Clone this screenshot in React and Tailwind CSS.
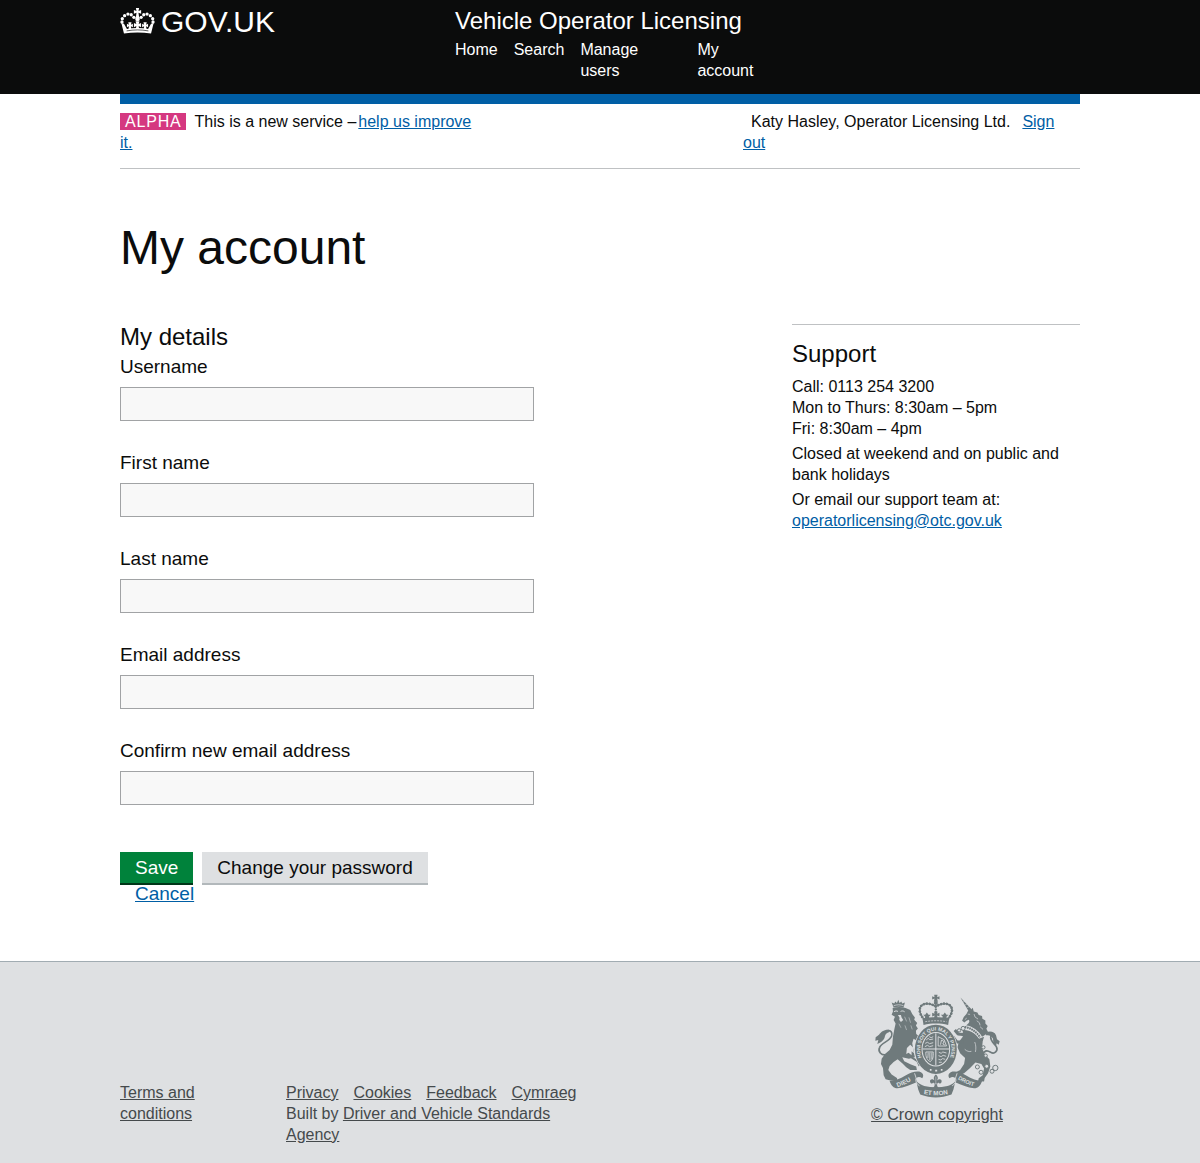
const CREST = '#6f7a7c';
const PAPER = '#dee0e2';

function GovCrown() {
  const balls = [[36, 66], [37, 56], [44, 47], [54, 42], [64, 44], [72, 52]];
  const arch = balls.map(([x, y]) => <circle key={x + '-' + y} cx={x} cy={y} r="5" />);
  const cross = 'M-5-10h10l-2 7 6-3v11l-6-3 2 14h-10l2-14-6 3V-6l6 3z';
  return (
    <svg viewBox="30 24 106 78" className="w-[35px] h-[26px] shrink-0" fill="currentColor" aria-hidden="true">
      <path d="M78 24h10l-2 9 8-3v11l-8-3 2 15h-10l2-15-8 3V30l8 3z" />
      <circle cx="83" cy="57" r="7" />
      <g>{arch}</g>
      <g transform="translate(166 0) scale(-1 1)">{arch}</g>
      <path d={cross} transform="translate(60 77)" />
      <path d={cross} transform="translate(106 77)" />
      <path d={cross} transform="translate(83 76) scale(1.2)" />
      <path d="M42 101L34 69L42 71L51 87C72 83 94 83 115 87L124 71L132 69L124 101C98 97 68 97 42 101Z" />
      <path d="M50 93C72 89 94 89 116 93" fill="none" stroke="#0b0c0c" strokeWidth="2" />
    </svg>
  );
}

function CoatOfArms() {
  return (
    <svg viewBox="30 24 376 312" className="w-[125px] h-[104px]" fill={CREST} role="img" aria-label="Royal coat of arms">
      {/* central crown */}
      <path d="M208 26h10l-1 7 7-3v10l-7-3 2 10h-12l2-10-7 3V30l7 3z" />
      <circle cx="213" cy="51" r="6" />
      <g fill="none" stroke={CREST} strokeLinecap="round">
        <path d="M178 100c-16-17-18-36-5-44 13-7 28-2 40 5 12-7 27-12 40-5 13 8 11 27-5 44" strokeWidth="4" />
        <path d="M178 100c-16-17-18-36-5-44 13-7 28-2 40 5 12-7 27-12 40-5 13 8 11 27-5 44" strokeWidth="8" strokeDasharray="0.1 9" />
        <path d="M213 62v20" strokeWidth="7" strokeDasharray="0.1 8" />
      </g>
      <path d="M208 76h10l-1 7 7-3v11l-7-3 2 12h-12l2-12-7 3V80l7 3zM186 79l5 7h7l-6 6 3 9h-16l2-9-6-6h6zM240 79l-5 7h-7l6 6-3 9h16l-2-9 6-6h-6z" />
      <path d="M173 98c26-6 54-6 80 0l-3 19c-24-6-50-6-74 0z" />
      <path d="M181 107c21-4 43-4 64 0" fill="none" stroke={PAPER} strokeWidth="2" strokeDasharray="6 3" />

      {/* lion */}
      <path d="M86 64L80 49L88 52L91 46L96 51L100 41L104 51L109 46L112 52L120 49L116 64C106 61 96 61 86 64Z" />
      <path d="M86 59C96 55 106 55 116 59" fill="none" stroke={PAPER} strokeWidth="2" />
      <path d="M83 66C95 62 110 62 122 66L136 72L142 84L150 94L148 101L157 111L153 118L159 127L153 134L154 144L164 152L168 162L156 164L146 158L142 172L146 196L150 214L132 218L112 214L118 226L138 236L154 242L156 252L136 252L124 244L112 232L98 220L86 228L74 240L70 252L80 266L96 276L98 286L76 284L62 280L56 268L54 246L48 234L50 218L60 204L74 192L82 176L84 152L88 130L92 112L86 102L90 92L80 86L84 76Z" />
      <path d="M87 77c4-3 8-3 12-1M107 76c4-2 8-2 12 1" fill="none" stroke={PAPER} strokeWidth="3" />
      <path d="M99 87h9l2 7 5 8-7 6-5-6 1-7z" fill={PAPER} />
      <path d="M119 92l6 14M102 113l6 12M132 94l5 16M120 118l5 14M138 118l4 12" fill="none" stroke={PAPER} strokeWidth="1.5" />
      <path d="M126 186L136 176L144 184L147 202L140 196L140 208L131 200L124 204Z" fill={PAPER} />
      <path d="M140 214L158 226L164 240" fill="none" stroke={CREST} strokeWidth="6" />
      <path d="M66 206C48 210 38 196 44 184C50 170 74 166 80 150C84 138 76 132 66 134" fill="none" stroke={CREST} strokeWidth="5" />
      <path d="M72 131C56 130 48 138 42 146L32 154L31 164L40 162L37 174C50 168 58 162 60 150C62 144 66 140 72 139Z" />

      {/* unicorn */}
      <path d="M287 34L321 70L312 76Z" />
      <path d="M294 48l9-3M300 57l9-4M306 65l9-4" stroke={PAPER} strokeWidth="1.5" />
      <path d="M310 74L318 72L324 65L327 76L338 79L342 87L352 90L353 98L362 103L362 112L369 120L365 128L370 138L362 146L352 152C342 134 322 119 304 118C313 112 316 106 312 101L305 104L299 109L292 104L297 93L305 84Z" />
      <path d="M309 84l7 1M300 101l6-5M328 84l3 9 9 6M336 104l8 6 2 8M346 122l9 8" fill="none" stroke={PAPER} strokeWidth="2" />
      <path d="M300 123C318 125 336 138 346 154" fill="none" stroke={CREST} strokeWidth="6" strokeDasharray="5 2" />
      <path d="M294 132C314 130 332 142 343 158L358 152L354 166L352 186L360 204L374 220L377 242L370 262L360 276L358 287L340 286L342 277L354 268L358 248L350 234L332 230L316 246L298 262L278 272L268 268L272 260L286 252L298 234L301 216L286 202L278 184L282 168L294 152Z" />
      <path d="M300 146L280 144L270 132M296 168L276 168L264 152" fill="none" stroke={CREST} strokeWidth="9" strokeLinejoin="round" />
      <path d="M300 190c6 6 14 8 20 6M330 168c4 10 4 20 2 30" fill="none" stroke={PAPER} strokeWidth="2" />
      <path d="M352 206C362 190 370 194 378 199C390 206 400 194 396 184C392 174 378 168 378 154C378 146 384 140 390 146" fill="none" stroke={CREST} strokeWidth="5" />
      <path d="M364 140C376 132 390 138 394 148L397 160L405 166L402 176L396 172L394 180C388 176 385 168 385 158C380 150 374 146 364 148Z" />
      <g fill="none" stroke={CREST} strokeWidth="3">
        <circle cx="295" cy="127" r="6" />
        <circle cx="283" cy="133" r="5" />
        <circle cx="338" cy="243" r="6" />
        <circle cx="349" cy="259" r="6" />
        <circle cx="382" cy="256" r="6" />
        <circle cx="392" cy="246" r="8" />
      </g>
      <g fill={PAPER} stroke={CREST} strokeWidth="3">
        <circle cx="356" cy="184" r="5" />
        <circle cx="363" cy="209" r="5" />
        <circle cx="366" cy="241" r="6" />
      </g>

      {/* garter and shield */}
      <ellipse cx="213" cy="190" rx="65" ry="76" fill={PAPER} />
      <ellipse cx="213" cy="190" rx="63" ry="74" />
      <path id="garter" d="M177 227A47 57 0 1 1 249 227" fill="none" />
      <text fontFamily="Liberation Sans, sans-serif" fontWeight="bold" fontSize="15" fill={PAPER}>
        <textPath href="#garter" startOffset="50%" textAnchor="middle">HONI SOIT QUI MAL Y PENSE</textPath>
      </text>
      <ellipse cx="213" cy="190" rx="43" ry="52" fill={PAPER} />
      <ellipse cx="213" cy="190" rx="40" ry="49" />
      <path d="M213 142v96M173 189h80" stroke={PAPER} strokeWidth="3" />
      <g fill="none" stroke={PAPER} strokeWidth="2.5">
        <path d="M184 162l6-5 5 4 10-2M181 172l7-3 6 4 11-3M180 182l8-4 6 4 11-3M193 152l6 3 6-3" />
        <path d="M220 180v-28l18 9 7 19zM227 176l3-14 8 5-4 7 6 3" />
        <path d="M183 198c-1 17 5 25 13 29 8-6 10-13 9-29zM190 200l-1 16M195 200v22M201 200v20" />
        <path d="M222 199l7 3 5-4 11 3M221 209l8 3 6-4 9 3M221 220l7 2 5-4 8 2M222 229l9 0" />
      </g>
      <path d="M195 252h5M211 254h6M228 252h5" stroke={PAPER} strokeWidth="5" />

      {/* motto scroll */}
      <ellipse cx="213" cy="290" rx="42" ry="24" fill={PAPER} />
      <path d="M213 266c8 7 7 13 3 19 7-9 17-4 14 4-2 5-8 5-9 1l-4 4v6l5 7h-18l5-7v-6l-4-4c-1 4-7 4-9-1-3-8 7-13 14-4-4-6-5-12 3-19z" />
      <path d="M213 272v22M203 294h20" stroke={PAPER} strokeWidth="1.5" />
      <path d="M74 285c14 0 31-6 49-17 13-8 28-13 40-11 12 3 15 13 9 20-8-6-17-5-18 3 0 9 10 15 24 20 24 5 47 5 70 0 15-5 25-11 24-20-1-8-10-9-18-3-6-7-3-17 9-20 12-2 27 3 40 11 18 11 35 17 49 17-4 13-12 22-24 22-20-1-37-10-57-18l-5 22-6 15c-34 12-60 12-94 0l-6-15-5-22c-20 8-37 17-57 18-12 0-20-9-24-22z" />
      <path d="M153 278c-2 9 3 17 11 22M273 278c2 9-3 17-11 22M149 262l6 18M277 262l-6 18" fill="none" stroke={PAPER} strokeWidth="2.5" />
      <path id="dieu" d="M98 304Q124 295 150 278" fill="none" />
      <path id="etmon" d="M164 322Q213 334 262 322" fill="none" />
      <path id="droit" d="M279 279Q302 295 336 304" fill="none" />
      <g fontFamily="Liberation Sans, sans-serif" fontWeight="bold" fontSize="19" fill={PAPER}>
        <text><textPath href="#dieu">DIEU</textPath></text>
        <text><textPath href="#etmon" startOffset="50%" textAnchor="middle">ET MON</textPath></text>
        <text fontSize="17"><textPath href="#droit">DROIT</textPath></text>
      </g>
    </svg>
  );
}

function Field({ id, label, type = 'text' }) {
  return (
    <div className="mb-[29px]">
      <label htmlFor={id} className="block text-[19px] leading-[25px] mb-2">{label}</label>
      <input id={id} name={id} type={type} className="block w-[414px] max-w-full h-[34px] px-1 text-[19px] bg-[#f8f8f8] border border-[#a1a3a5] rounded-none" />
    </div>
  );
}

export default function App() {
  return (
    <div className="min-h-screen flex flex-col bg-white text-[#0b0c0c] text-[16px] leading-[21px] font-['Helvetica','Liberation_Sans',Arial,sans-serif]">
      <header className="bg-[#0b0c0c] text-white">
        <div className="max-w-[960px] w-full mx-auto flex pt-2 pb-[13px]">
          <div className="w-[335px]">
            <a href="#" className="inline-flex gap-[6px] text-[30px] leading-[28px]">
              <GovCrown />
              <span>GOV.UK</span>
            </a>
          </div>
          <div>
            <a href="#" className="block text-[24px] leading-[26px] mb-[5px]">Vehicle Operator Licensing</a>
            <nav>
              <ul className="flex gap-4">
                <li><a href="#">Home</a></li>
                <li><a href="#">Search</a></li>
                <li className="w-[101px]"><a href="#">Manage<br />users</a></li>
                <li><a href="#">My<br />account</a></li>
              </ul>
            </nav>
          </div>
        </div>
      </header>

      <div className="w-full max-w-[960px] mx-auto grow">
        <div className="h-[10px] bg-[#005ea5]" />
        <div className="flex justify-between border-b border-[#bfc1c3] pt-[7px] pb-[15px]">
          <p className="w-[360px]">
            <strong className="inline-block mr-2 px-[5px] leading-[17px] bg-[#d53880] text-white font-normal tracking-wider">ALPHA</strong>
            <span className="mr-[2px]">This is a new service –</span>
            <a href="#" className="text-[#005ea5] underline">help us improve it.</a>
          </p>
          <p className="w-[337px]">
            <span className="ml-2 mr-3">Katy Hasley, Operator Licensing Ltd.</span>
            <a href="#" className="text-[#005ea5] underline">Sign<br />out</a>
          </p>
        </div>

        <main>
          <h1 className="mt-[54px] text-[48px] leading-[50px]">My account</h1>
          <div className="flex mt-[50px]">
            <form className="w-[70%]" onSubmit={(e) => e.preventDefault()}>
              <h2 className="text-[24px] leading-[28px] mb-[3px]">My details</h2>
              <Field id="username" label="Username" />
              <Field id="first-name" label="First name" />
              <Field id="last-name" label="Last name" />
              <Field id="email" label="Email address" type="email" />
              <Field id="confirm-email" label="Confirm new email address" type="email" />
              <div className="mt-[47px] text-[19px]">
                <div className="flex gap-[9px]">
                  <button type="submit" className="h-[33px] px-[15px] pb-px bg-[#00823b] border-b-2 border-[#003618] text-white">Save</button>
                  <button type="button" className="h-[33px] px-[15px] pb-px bg-[#dee0e2] border-b-2 border-[#b2b8bb]">Change your password</button>
                </div>
                <a href="#" className="block w-fit ml-[15px] leading-[18px] text-[#005ea5] underline">Cancel</a>
              </div>
            </form>
            <aside className="w-[30%] mt-px">
              <div className="border-t border-[#bfc1c3] pt-[14px]">
                <h2 className="text-[24px] leading-[30px] mb-[7px]">Support</h2>
                <p className="mb-1">Call: 0113 254 3200<br />Mon to Thurs: 8:30am – 5pm<br />Fri: 8:30am – 4pm</p>
                <p className="mb-1">Closed at weekend and on public and bank holidays</p>
                <p>Or email our support team at:<br /><a href="#" className="text-[#005ea5] underline">operatorlicensing@otc.gov.uk</a></p>
              </div>
            </aside>
          </div>
        </main>
      </div>

      <footer className="mt-[58px] bg-[#dee0e2] border-t border-[#a1acb2] text-[#454a4c]">
        <div className="max-w-[960px] mx-auto flex justify-between pt-8 pb-[18px]">
          <div className="flex items-start self-end">
            <a href="#" className="w-[166px] underline">Terms and<br />conditions</a>
            <div className="w-[300px]">
              <ul className="flex gap-[15px]">
                <li><a href="#" className="underline">Privacy</a></li>
                <li><a href="#" className="underline">Cookies</a></li>
                <li><a href="#" className="underline">Feedback</a></li>
                <li><a href="#" className="underline">Cymraeg</a></li>
              </ul>
              <p>Built by <a href="#" className="underline">Driver and Vehicle Standards Agency</a></p>
            </div>
          </div>
          <a href="#" className="w-[286px] flex flex-col items-center pb-5 gap-[6px] underline">
            <CoatOfArms />
            <span>© Crown copyright</span>
          </a>
        </div>
      </footer>
    </div>
  );
}
